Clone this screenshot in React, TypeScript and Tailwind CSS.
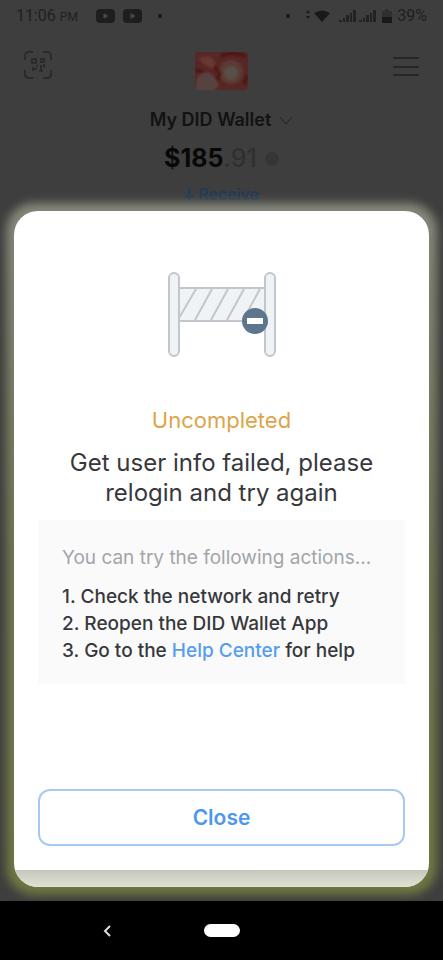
import React from "react";

function YoutubeIcon() {
  return (
    <svg width="19" height="14" viewBox="0 0 19 14" aria-hidden="true">
      <rect width="19" height="14" rx="4" fill="#1e1e1e" />
      <path d="M7.500 4v6l5-3z" fill="#484848" />
    </svg>
  );
}

function SignalIcon() {
  return (
    <svg width="18" height="14" viewBox="0 0 18 14" fill="#222222" aria-hidden="true">
      <rect x="0" y="11" width="3" height="2" />
      <rect x="4" y="9" width="2" height="4" />
      <rect x="7" y="6" width="3" height="7" />
      <rect x="11" y="4" width="2" height="9" />
      <rect x="14" y="1" width="3" height="12" />
    </svg>
  );
}

function StatusBar() {
  return (
    <div className="flex h-8 items-center justify-between px-4 text-[#202020]">
      <div className="flex items-center">
        <span className="flex w-20 items-baseline gap-1 whitespace-nowrap font-[Roboto,sans-serif]">
          <span className="text-base">11:06</span>
          <span className="text-xs">PM</span>
        </span>
        <span className="flex items-center gap-2">
          <YoutubeIcon />
          <YoutubeIcon />
          <span className="ml-2 size-1 rounded-full bg-[#1b1b1b]" />
        </span>
      </div>
      <div className="flex items-center">
        <span className="mr-4 size-1 rounded-full bg-[#1b1b1b]" />
        <svg width="25" height="14" viewBox="0 0 25 14" fill="#191919" aria-hidden="true">
          <path d="M0 4l2-3 2 3zM0 7h4l-2 3zM8 4q8-5 16 0l-8 9z" />
        </svg>
        <span className="ml-2 flex gap-0.5">
          <SignalIcon />
          <SignalIcon />
        </span>
        <svg className="mx-1" width="12" height="16" viewBox="0 0 12 16" aria-hidden="true">
          <path d="M4 1h4v2h3v6H1V3h3z" fill="#303030" />
          <path d="M1 9h10v6H1z" fill="#191919" />
        </svg>
        <span className="font-[Roboto,sans-serif] text-base">39%</span>
      </div>
    </div>
  );
}

function ScanIcon() {
  return (
    <svg width="28" height="28" viewBox="0 0 28 28" fill="none" stroke="#2b2b2b" strokeWidth="2" aria-hidden="true">
      <path d="M1 9V5q0-4 4-4h4M19 1h4q4 0 4 4v4M27 19v4q0 4-4 4h-4M9 27H5q-4 0-4-4v-4" />
      <path d="M8 8h4v4H8zM17 8h3v3h-3zM8 18h5M9 16v4M17 14v6M20 13v4M15 20h4M13 14v2" />
    </svg>
  );
}

function WalletLogo() {
  return (
    <svg width="53" height="38" viewBox="0 0 53 38" aria-hidden="true">
      <defs>
        <filter id="soft" x="-20%" y="-20%" width="140%" height="140%">
          <feGaussianBlur stdDeviation="1.2" />
        </filter>
        <clipPath id="logoShape">
          <rect width="53" height="38" rx="4" />
        </clipPath>
      </defs>
      <g clipPath="url(#logoShape)">
        <rect width="53" height="38" fill="#562725" />
        <g filter="url(#soft)">
          <path d="M2 26q8-9 14-4t8 12l-6 5H0z" fill="#59433f" />
          <path d="M3 6l12-2 6 7-4 6-9-5z" fill="#673735" />
          <circle cx="36" cy="20" r="12" fill="#5d3a36" />
          <circle cx="36" cy="21" r="7" fill="#58504a" />
          <path d="M0 18l9 2M20 15l5 7-3 7M26 4q10-5 25 0M49 32l3-8" stroke="#4c1511" strokeWidth="3" fill="none" />
        </g>
      </g>
    </svg>
  );
}

function WalletHeader() {
  return (
    <header className="flex h-[179px] flex-col">
      <div className="grid h-[74px] grid-cols-3 items-center px-6">
        <button type="button" aria-label="Scan" className="justify-self-start pb-2">
          <ScanIcon />
        </button>
        <span className="justify-self-center pt-1">
          <WalletLogo />
        </span>
        <button type="button" aria-label="Menu" className="justify-self-end pb-1">
          <svg width="26" height="20" viewBox="0 0 26 20" stroke="#272727" strokeWidth="2" aria-hidden="true">
            <path d="M0 1h26M0 10h26M0 18h26" />
          </svg>
        </button>
      </div>
      <button type="button" className="flex h-7 items-center justify-center gap-2 text-lg font-semibold text-[#121212]">
        My DID Wallet
        <svg width="14" height="9" viewBox="0 0 14 9" fill="none" stroke="#222222" strokeWidth="1" aria-hidden="true">
          <path d="M1 1l6 7 6-7" />
        </svg>
      </button>
      <div className="flex h-[50px] items-center justify-center gap-2 text-[25px] font-bold text-[#080808]">
        <span>
          $185<span className="font-medium text-[#303030]">.91</span>
        </span>
        <span className="size-3.5 rounded-full bg-[#353535]" />
      </div>
      <button type="button" className="flex h-5 items-center justify-center gap-1 text-base font-medium text-[#203a58]">
        <svg width="10" height="13" viewBox="0 0 10 13" fill="none" stroke="#203a58" strokeWidth="2" aria-hidden="true">
          <path d="M5 0v11M1 7l4 4 4-4" />
        </svg>
        Receive
      </button>
    </header>
  );
}

function BarrierIllustration() {
  return (
    <svg width="108" height="86" viewBox="0 0 108 86" fill="#eff3f6" stroke="#c3c6cc" strokeWidth="2" aria-hidden="true">
      <path d="M11 16h86v33H11z" />
      <path d="M11 46L28 17M27 48L44 17M43 48L60 17M59 48L76 17M75 48L92 17" fill="none" />
      <rect x="1" y="1" width="10" height="83" rx="5" />
      <rect x="97" y="1" width="10" height="83" rx="5" />
      <circle cx="87" cy="49" r="13" fill="#5d758d" stroke="none" />
      <rect x="79" y="46" width="16" height="6" fill="#ffffff" stroke="none" />
    </svg>
  );
}

function ErrorDialog() {
  return (
    <main className="relative isolate mx-3.5 mb-3.5 flex grow flex-col">
      <div className="absolute -inset-2 -z-10 rounded-[28px] bg-linear-to-b from-[#85887a] via-[#727653] to-[#707742] blur-[5px]" />
      <section
        role="dialog"
        aria-labelledby="dialog-title"
        className="flex grow flex-col overflow-hidden rounded-3xl bg-white"
      >
        <div className="flex grow flex-col px-6 pb-6 pt-[61px]">
          <div className="flex justify-center">
            <BarrierIllustration />
          </div>
          <h1 id="dialog-title" className="mt-[46px] text-center text-[22px] leading-8 text-[#dda449]">
            Uncompleted
          </h1>
          <p className="mt-3 text-center text-2xl leading-[30px] text-[#37383c]">
            Get user info failed, please
            <br />
            relogin and try again
          </p>
          <div className="mt-3 bg-[#fafafa] px-6 pb-5 pt-6 text-[19px] leading-[27px] text-[#37383c]">
            <p className="whitespace-nowrap text-[#a2a5aa]">You can try the following actions...</p>
            <ol className="mt-3 list-none whitespace-nowrap font-medium">
              <li>1. Check the network and retry</li>
              <li>2. Reopen the DID Wallet App</li>
              <li>
                3. Go to the{" "}
                <a href="#help" className="text-[#559df0]">
                  Help Center
                </a>{" "}
                for help
              </li>
            </ol>
          </div>
          <button
            type="button"
            className="mt-auto h-[57px] w-full rounded-xl border-2 border-[#a8c9f2] text-[21px] font-semibold text-[#4d98ee]"
          >
            Close
          </button>
        </div>
        <div className="h-[17px] bg-linear-to-b from-[#c5c7bc] to-[#e0e3d3]" />
      </section>
    </main>
  );
}

function NavigationBar() {
  return (
    <nav className="relative z-10 grid h-[59px] grid-cols-4 items-center bg-black">
      <button type="button" aria-label="Back" className="justify-self-end">
        <svg width="8" height="14" viewBox="0 0 8 14" fill="none" stroke="#dddddd" strokeWidth="2" aria-hidden="true">
          <path d="M7 2L2 7l5 5" />
        </svg>
      </button>
      <button type="button" aria-label="Home" className="col-span-2 h-[13px] w-9 justify-self-center rounded-full bg-white" />
    </nav>
  );
}

export default function App() {
  return (
    <div className="flex min-h-screen flex-col overflow-hidden bg-[#3e3e3e] font-[Inter,sans-serif]">
      <StatusBar />
      <WalletHeader />
      <ErrorDialog />
      <NavigationBar />
    </div>
  );
}
